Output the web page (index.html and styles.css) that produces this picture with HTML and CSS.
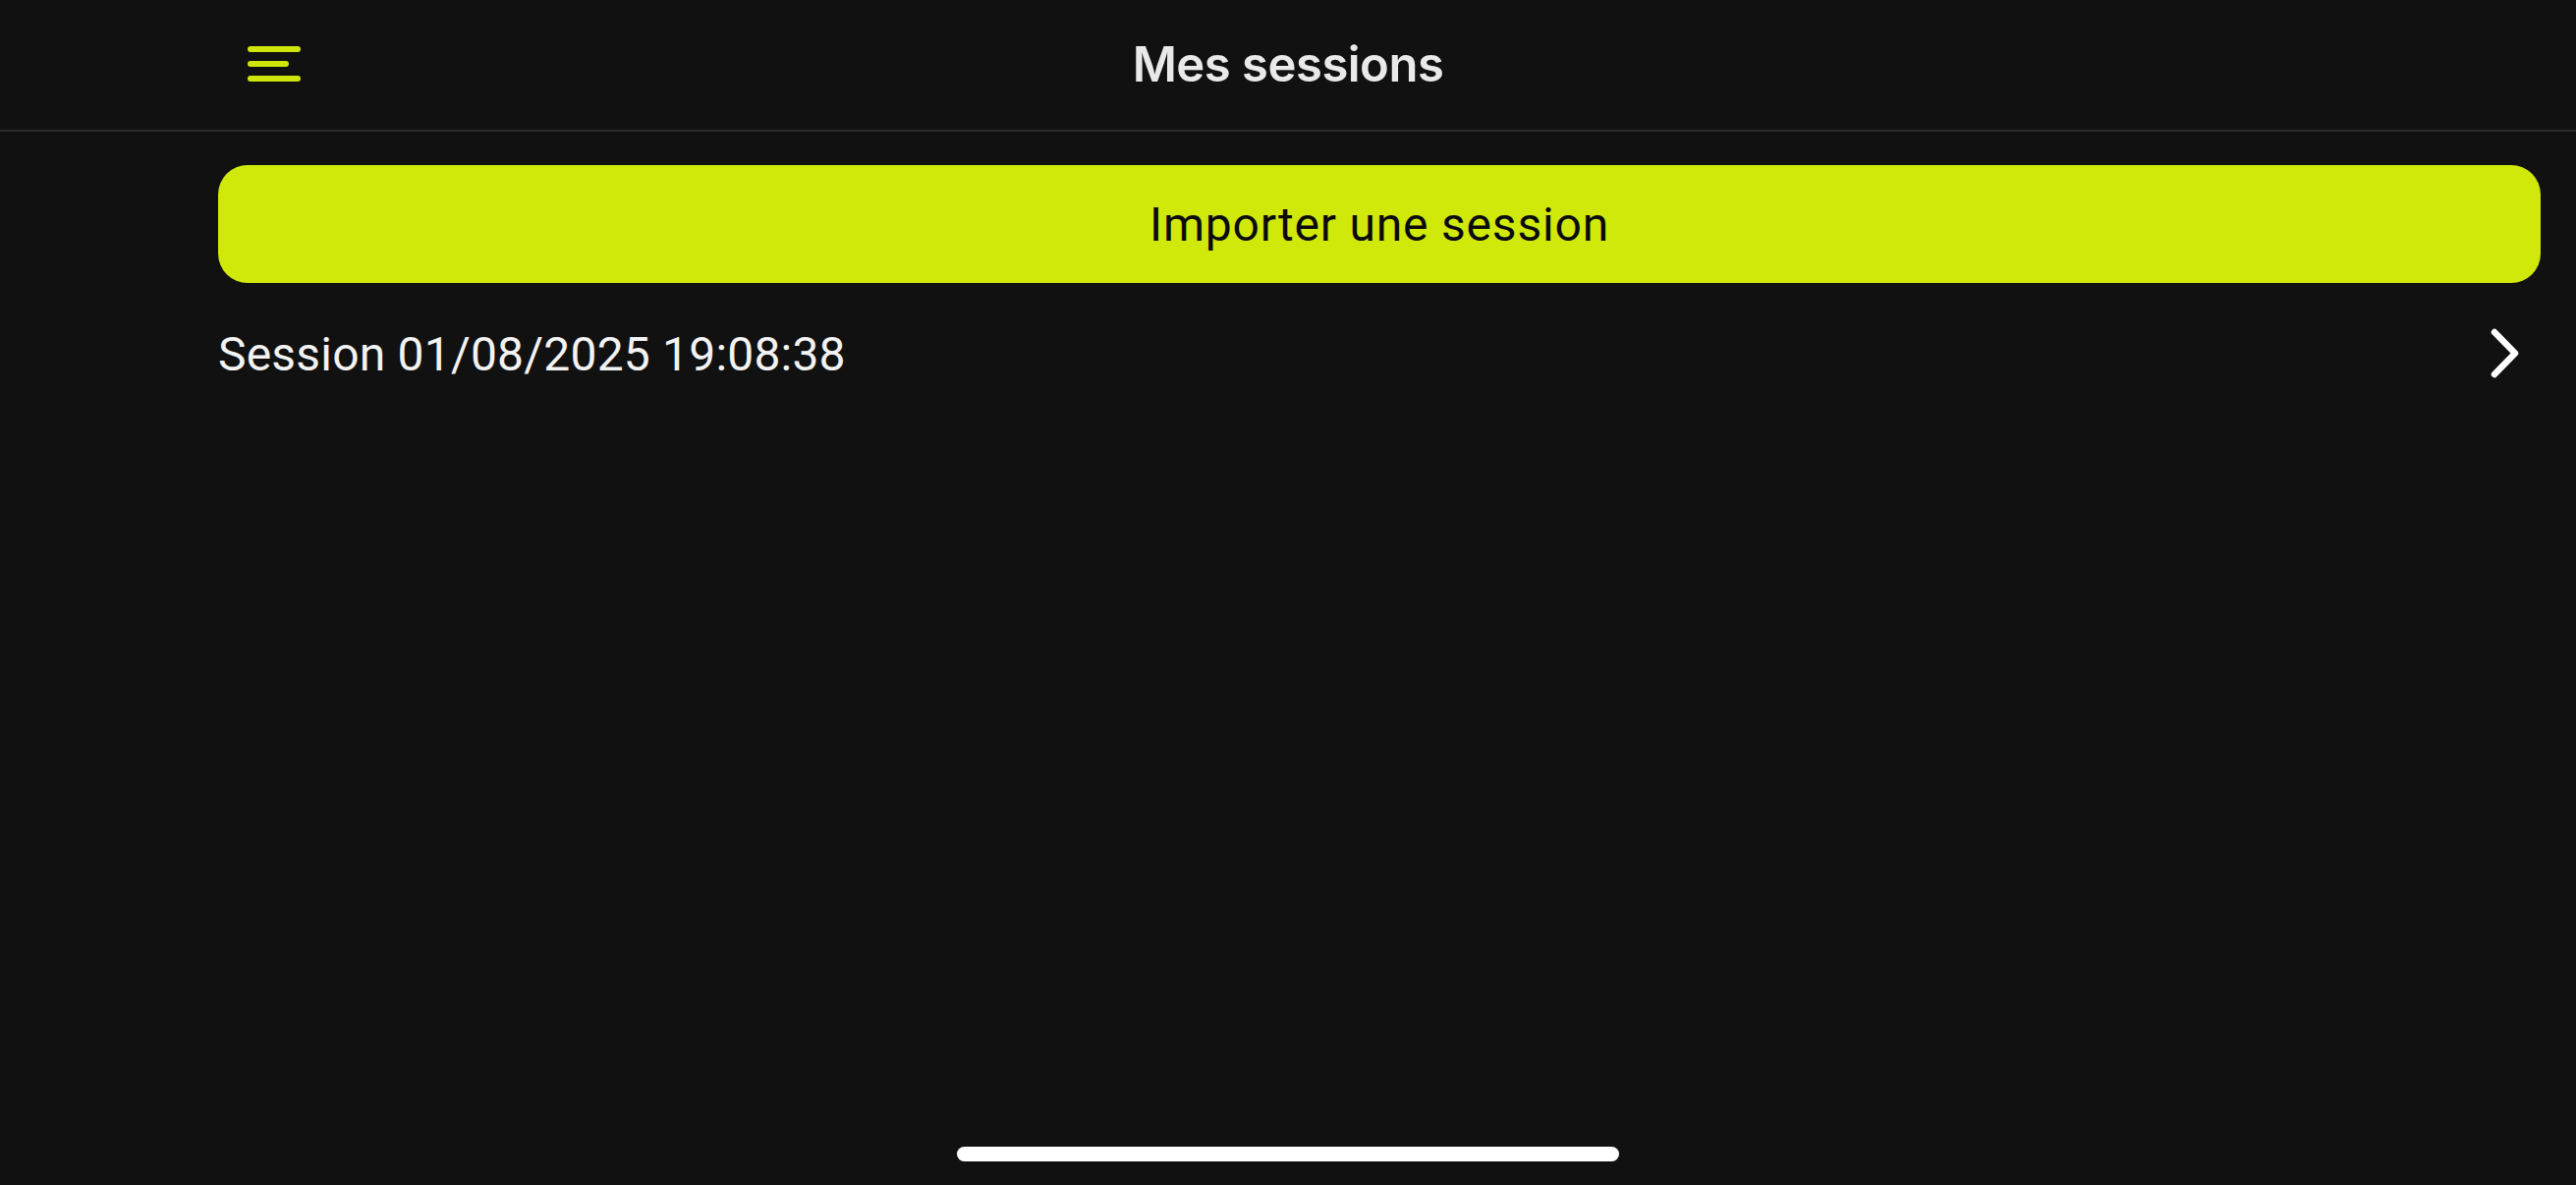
FILE: index.html
```html
<!DOCTYPE html>
<html lang="fr">
<head>
<meta charset="utf-8">
<title>Mes sessions</title>
<link rel="stylesheet" href="styles.css">
</head>
<body>
<div class="app">
  <header class="topbar">
    <div class="topbar-left">
      <button class="menu-btn" aria-label="Menu">
        <svg width="56" height="40" viewBox="0 0 56 40">
          <line x1="3" y1="5" x2="51" y2="5" />
          <line x1="3" y1="20" x2="39" y2="20" />
          <line x1="3" y1="35" x2="51" y2="35" />
        </svg>
      </button>
    </div>
    <h1 class="title">Mes sessions</h1>
    <div class="topbar-right"></div>
  </header>
  <main class="content">
    <button class="import-btn">Importer une session</button>
    <ul class="session-list">
      <li class="session-item">
        <span class="session-name">Session 01/08/2025 19:08:38</span>
        <svg class="chevron" width="36" height="56" viewBox="0 0 36 56">
          <polyline points="6,6 27,27.5 6,49" />
        </svg>
      </li>
    </ul>
  </main>
  <div class="home-indicator"></div>
</div>
</body>
</html>
```

FILE: styles.css
```css
* { box-sizing: border-box; }
html, body {
  margin: 0;
  padding: 0;
  background: #111111;
  height: 100%;
}
.app {
  position: relative;
  width: 100%;
  height: 100vh;
  display: flex;
  flex-direction: column;
  font-family: Roboto, "Liberation Sans", sans-serif;
}
.topbar {
  height: 134px;
  display: grid;
  grid-template-columns: 1fr auto 1fr;
  align-items: center;
  border-bottom: 2px solid #2b2b2b;
  padding-bottom: 2px;
}
.topbar-left {
  padding-left: 252px;
}
.menu-btn {
  background: none;
  border: 0;
  padding: 0;
  width: 56px;
  height: 40px;
  display: block;
}
.menu-btn svg {
  display: block;
}
.menu-btn svg line {
  stroke: #cfe60b;
  stroke-width: 6;
  stroke-linecap: round;
}
.title {
  margin: 0;
  font-family: Inter, "Noto Sans", sans-serif;
  font-weight: 600;
  font-size: 49px;
  line-height: 1;
  color: #e9e9e9;
  letter-spacing: -0.5px;
}
.content {
  padding: 34px 36px 0 222px;
  display: flex;
  flex-direction: column;
}
.import-btn {
  height: 120px;
  width: 100%;
  border: 0;
  border-radius: 30px;
  background: #d0e90a;
  color: #0b0b0b;
  font-family: Roboto, "Liberation Sans", sans-serif;
  font-size: 48px;
  font-weight: 400;
  padding: 0;
  letter-spacing: 0.8px;
}
.session-list {
  list-style: none;
  margin: 0;
  padding: 0;
}
.session-item {
  height: 144px;
  display: flex;
  align-items: center;
  justify-content: space-between;
}
.session-name {
  font-size: 48px;
  color: #f2f2f2;
  letter-spacing: 0.2px;
}
.chevron {
  margin-right: 17px;
}
.chevron polyline {
  fill: none;
  stroke: #ffffff;
  stroke-width: 6.5;
  stroke-linecap: round;
  stroke-linejoin: round;
}
.home-indicator {
  position: absolute;
  left: 50%;
  bottom: 24px;
  width: 674px;
  height: 15px;
  margin-left: -337px;
  border-radius: 8px;
  background: #ffffff;
}
```
